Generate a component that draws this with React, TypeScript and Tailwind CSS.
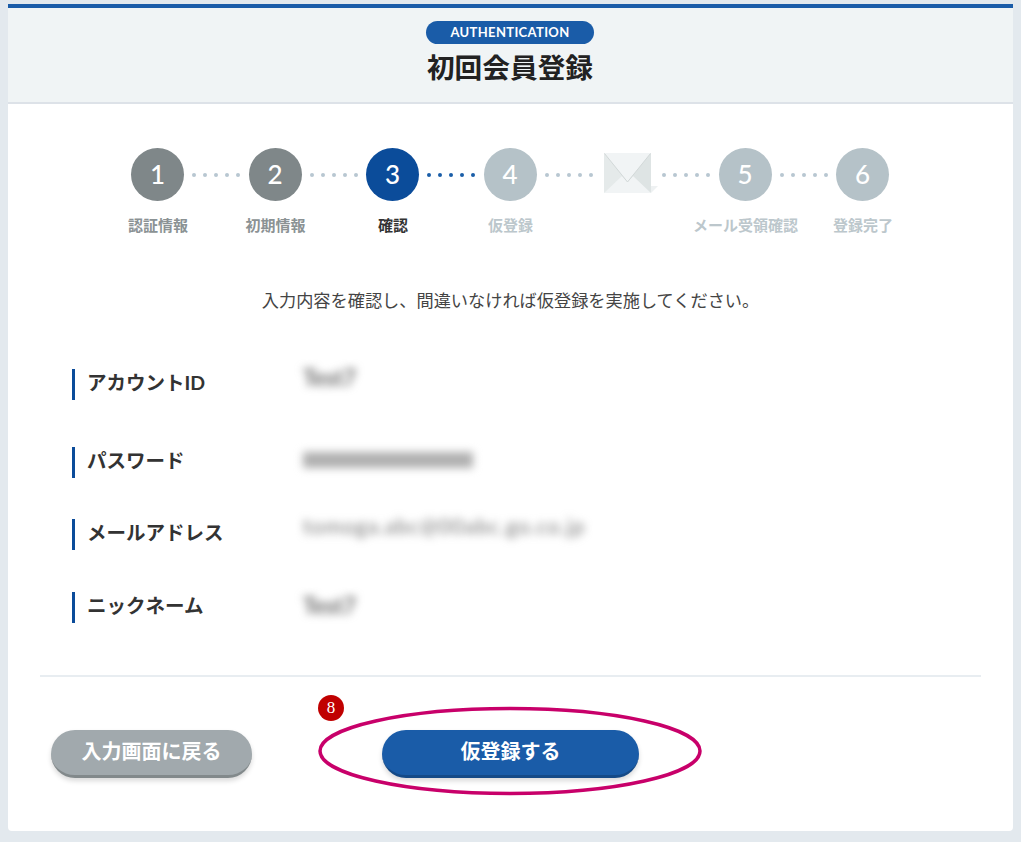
const FONT = "font-['Lato','Noto_Sans_CJK_JP',sans-serif]";

type Step = { label: string; num?: string; state: "done" | "active" | "todo" };

const steps: Step[] = [
  { num: "1", label: "認証情報", state: "done" },
  { num: "2", label: "初期情報", state: "done" },
  { num: "3", label: "確認", state: "active" },
  { num: "4", label: "仮登録", state: "todo" },
  { label: "", state: "todo" },
  { num: "5", label: "メール受領確認", state: "todo" },
  { num: "6", label: "登録完了", state: "todo" },
];

function Dots({ active }: { active: boolean }) {
  return (
    <div className="w-[64.5px] flex justify-center gap-[7px]">
      {[0, 1, 2, 3, 4].map((i) => (
        <span
          key={i}
          className={active ? "w-[4px] h-[4px] rounded-full bg-[#1a5ea8]" : "w-[4px] h-[4px] rounded-full bg-[#b8c7d1]"}
        />
      ))}
    </div>
  );
}

function Envelope() {
  return (
    <svg className="overflow-visible" width="53" height="53" viewBox="0 0 53 53">
      <path d="M50 38 L57 38 L50 45 Z" fill="#eef1f2" />
      <path d="M3 5 H50 V45 H3 Z" fill="#f1f4f5" />
      <path d="M3 5 L26.5 34 L3 45 Z" fill="#e5eaea" />
      <path d="M50 5 L26.5 34 L50 45 Z" fill="#dee4e4" />
      <path d="M3 45 L21 28 L26.5 34 L32 28 L50 45 Z" fill="#f1f4f5" />
      <path d="M3.5 5.5 L26.5 34 L49.5 5.5" fill="none" stroke="#d2d8d8" strokeWidth="1" />
    </svg>
  );
}

function Circle({ step }: { step: Step }) {
  if (!step.num) return <Envelope />;
  const bg = step.state === "done" ? "bg-[#7f8789]" : step.state === "active" ? "bg-[#0b4c9a]" : "bg-[#b5c2c8]";
  return (
    <div className={`w-[53px] h-[53px] rounded-full flex items-center justify-center text-white text-[26px] font-medium ${bg}`}>
      {step.num}
    </div>
  );
}

function Row({ label, value, valueClass, mb }: { label: string; value: string; valueClass: string; mb: string }) {
  return (
    <div className={`flex items-center h-[31px] pl-[64px] ${mb}`}>
      <div className="w-[231px] h-full border-l-[3px] border-[#0b4c9a] pl-[12px] pb-[3px] flex items-center text-[19.5px] font-bold text-[#333] leading-none">
        {label}
      </div>
      <div className={valueClass}>{value}</div>
    </div>
  );
}

export default function App() {
  return (
    <div className={`${FONT} min-h-[842px] bg-[#e3e9ee] pt-[4px] pl-[8px]`}>
      <div className="w-[1005px] h-[827px] bg-white rounded-b-[4px] border-t-[4px] border-[#1a5ca8]">
        <header className="h-[96px] bg-[#f0f4f5] border-b-2 border-[#dde2e8] pt-[13px] flex flex-col items-center">
          <div className="w-[168px] h-[23px] mr-[1px] rounded-full bg-[#1a5ca8] text-white text-[13px] font-bold tracking-[0.35px] flex items-center justify-center">
            AUTHENTICATION
          </div>
          <h1 className="mt-[4px] mr-[1px] text-[27.7px] leading-[40px] font-bold text-[#222]">初回会員登録</h1>
        </header>

        <main>
          <div className="pt-[44px] pr-[1px] flex justify-center">
            {steps.map((s, i) => (
              <div key={i} className="flex items-center">
                <Circle step={s} />
                {i < steps.length - 1 && <Dots active={s.state === "active"} />}
              </div>
            ))}
          </div>
          <div className="mt-[14px] flex justify-center">
            {steps.map((s, i) => (
              <div
                key={i}
                className={`w-[117.5px] h-[20px] text-center text-[15px] leading-[20px] font-bold whitespace-nowrap ${
                  s.state === "done" ? "text-[#8b9294]" : s.state === "active" ? "text-[#333]" : "text-[#bcc7cc]"
                }`}
              >
                {s.label}
              </div>
            ))}
          </div>

          <p className="mt-[54px] text-center text-[17.2px] leading-[24px] text-[#444]">
            入力内容を確認し、間違いなければ仮登録を実施してください。
          </p>

          <div className="mt-[56px]">
            <Row label="アカウントID" value="Test7" mb="mb-[47px]" valueClass="pb-[14px] text-[22px] font-bold text-[#666] blur-[4px]" />
            <Row label="パスワード" value="" mb="mb-[41px]" valueClass="w-[170px] h-[16px] mb-[6px] bg-[#b0b0b0] blur-[4px]" />
            <Row label="メールアドレス" value="tomoga.abc@00abc.go.co.jp" mb="mb-[42px]" valueClass="pb-[18px] text-[21px] tracking-[1px] text-[#777] blur-[4px]" />
            <Row label="ニックネーム" value="Test7" mb="mb-0" valueClass="pb-[4px] text-[22px] font-bold text-[#666] blur-[4px]" />
          </div>

          <div className="mt-[52px] mx-[32px] h-[2px] bg-[#e8edf1]" />

          <div className="relative mt-[53px] pl-[43px] flex gap-[130px]">
            <button className="w-[201px] h-[48px] pb-[3px] rounded-full bg-[#a1a9ad] border-b-[3px] border-[#82898b] shadow-[0_3px_5px_rgba(0,0,0,0.15)] text-white text-[20px] font-bold whitespace-nowrap">
              入力画面に戻る
            </button>
            <button className="w-[257px] h-[48px] pb-[3px] rounded-full bg-[#1a5ca8] border-b-[3px] border-[#154a87] shadow-[0_3px_5px_rgba(0,0,0,0.15)] text-white text-[20px] font-bold whitespace-nowrap">
              仮登録する
            </button>
            <div className="absolute left-[310px] top-[-35px] w-[26px] h-[26px] rounded-full bg-[#c00000] text-white text-[17px] font-['Liberation_Serif',serif] flex items-center justify-center">
              8
            </div>
            <svg className="absolute left-[310px] top-[-24px]" width="384" height="90" viewBox="0 0 384 90">
              <ellipse cx="192" cy="45" rx="190" ry="42.5" fill="none" stroke="#c8006a" strokeWidth="3.5" />
            </svg>
          </div>
        </main>
      </div>
    </div>
  );
}
